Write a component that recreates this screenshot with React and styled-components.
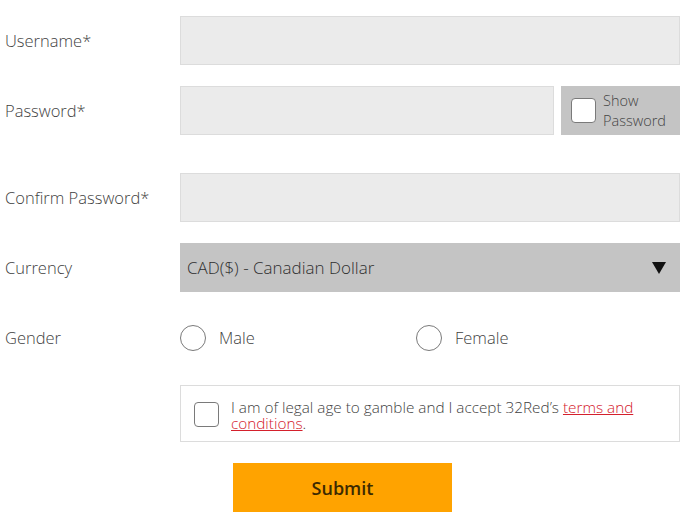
import React from 'react';
import styled, { createGlobalStyle } from 'styled-components';

const GlobalStyle = createGlobalStyle`
  body {
    margin: 0;
    background: #fff;
    font-family: "Open Sans", "Liberation Sans", sans-serif;
    color: #444;
  }
`;

function App() {
  return (
    <>
      <GlobalStyle />
      <Form>
        <Row>
          <Label>Username*</Label>
          <TextInput />
        </Row>
        <Row>
          <Label>Password*</Label>
          <PasswordWrap>
            <TextInput />
            <ShowBox>
              <Box />
              <ShowText>Show<br />Password</ShowText>
            </ShowBox>
          </PasswordWrap>
        </Row>
        <Row $top={38}>
          <Label>Confirm Password*</Label>
          <TextInput />
        </Row>
        <Row>
          <Label>Currency</Label>
          <Select>
            <span>CAD($) - Canadian Dollar</span>
            <Arrow />
          </Select>
        </Row>
        <Row>
          <Label>Gender</Label>
          <RadioGroup>
            <RadioOption>
              <Radio />
              Male
            </RadioOption>
            <RadioOption>
              <Radio />
              Female
            </RadioOption>
          </RadioGroup>
        </Row>
        <Row $top={23}>
          <span />
          <Terms>
            <Box />
            <TermsText>
              I am of legal age to gamble and I accept 32Red’s <TermsLink>terms and conditions</TermsLink>.
            </TermsText>
          </Terms>
        </Row>
        <SubmitRow>
          <SubmitButton>Submit</SubmitButton>
        </SubmitRow>
      </Form>
    </>
  );
}

export default App;

const Form = styled.div`
  display: flex;
  flex-direction: column;
  padding: 16px 7px 0 0;
  width: 687px;
  box-sizing: border-box;
`;

const Row = styled.div`
  display: grid;
  grid-template-columns: 180px 1fr;
  align-items: center;
  min-height: 49px;
  margin-top: ${(p) => (p.$top !== undefined ? p.$top : 21)}px;
  &:first-child {
    margin-top: 0;
  }
`;

const Label = styled.div`
  padding-left: 5px;
  font-size: 16.5px;
  font-weight: 300;
  color: #3f3f3f;
`;

const TextInput = styled.div`
  height: 49px;
  box-sizing: border-box;
  background: #ebebeb;
  border: 1px solid #dcdcdc;
`;

const PasswordWrap = styled.div`
  display: grid;
  grid-template-columns: 1fr 119px;
  gap: 7px;
`;

const ShowBox = styled.div`
  display: flex;
  align-items: center;
  gap: 7px;
  height: 49px;
  padding-left: 10px;
  background: #c4c4c4;
`;

const Box = styled.div`
  flex: none;
  width: 25px;
  height: 25px;
  box-sizing: border-box;
  background: #fff;
  border: 1px solid #7a7a7a;
  border-radius: 4px;
`;

const ShowText = styled.div`
  font-size: 14.5px;
  font-weight: 300;
  line-height: 20px;
  color: #444;
`;

const Select = styled.div`
  display: flex;
  align-items: center;
  justify-content: space-between;
  height: 49px;
  padding: 0 14px 0 7px;
  background: #c4c4c4;
  font-size: 17px;
  font-weight: 300;
  color: #2f2f2f;
`;

const Arrow = styled.div`
  width: 0;
  height: 0;
  border-left: 7px solid transparent;
  border-right: 7px solid transparent;
  border-top: 12px solid #111;
`;

const RadioGroup = styled.div`
  display: grid;
  grid-template-columns: 236px 1fr;
`;

const RadioOption = styled.label`
  display: flex;
  align-items: center;
  gap: 13px;
  font-size: 16.5px;
  font-weight: 300;
  color: #3f3f3f;
`;

const Radio = styled.span`
  width: 26px;
  height: 26px;
  box-sizing: border-box;
  border: 1px solid #7a7a7a;
  border-radius: 50%;
  background: #fff;
`;

const Terms = styled.div`
  display: flex;
  align-items: flex-start;
  gap: 12px;
  min-height: 57px;
  box-sizing: border-box;
  padding: 16px 14px 0 13px;
  background: #fff;
  border: 1px solid #dcdcdc;
`;

const TermsText = styled.div`
  font-size: 15.3px;
  font-weight: 300;
  line-height: 16px;
  color: #3f3f3f;
  margin-top: -3px;
`;

const TermsLink = styled.a`
  color: #d4202c;
  text-decoration: underline;
`;

const SubmitRow = styled.div`
  padding: 21px 0 0 233px;
`;

const SubmitButton = styled.button`
  width: 219px;
  height: 49px;
  border: none;
  background: #ffa300;
  color: #3d2a00;
  font-family: "Open Sans", "Liberation Sans", sans-serif;
  font-size: 18px;
  font-weight: 600;
`;
